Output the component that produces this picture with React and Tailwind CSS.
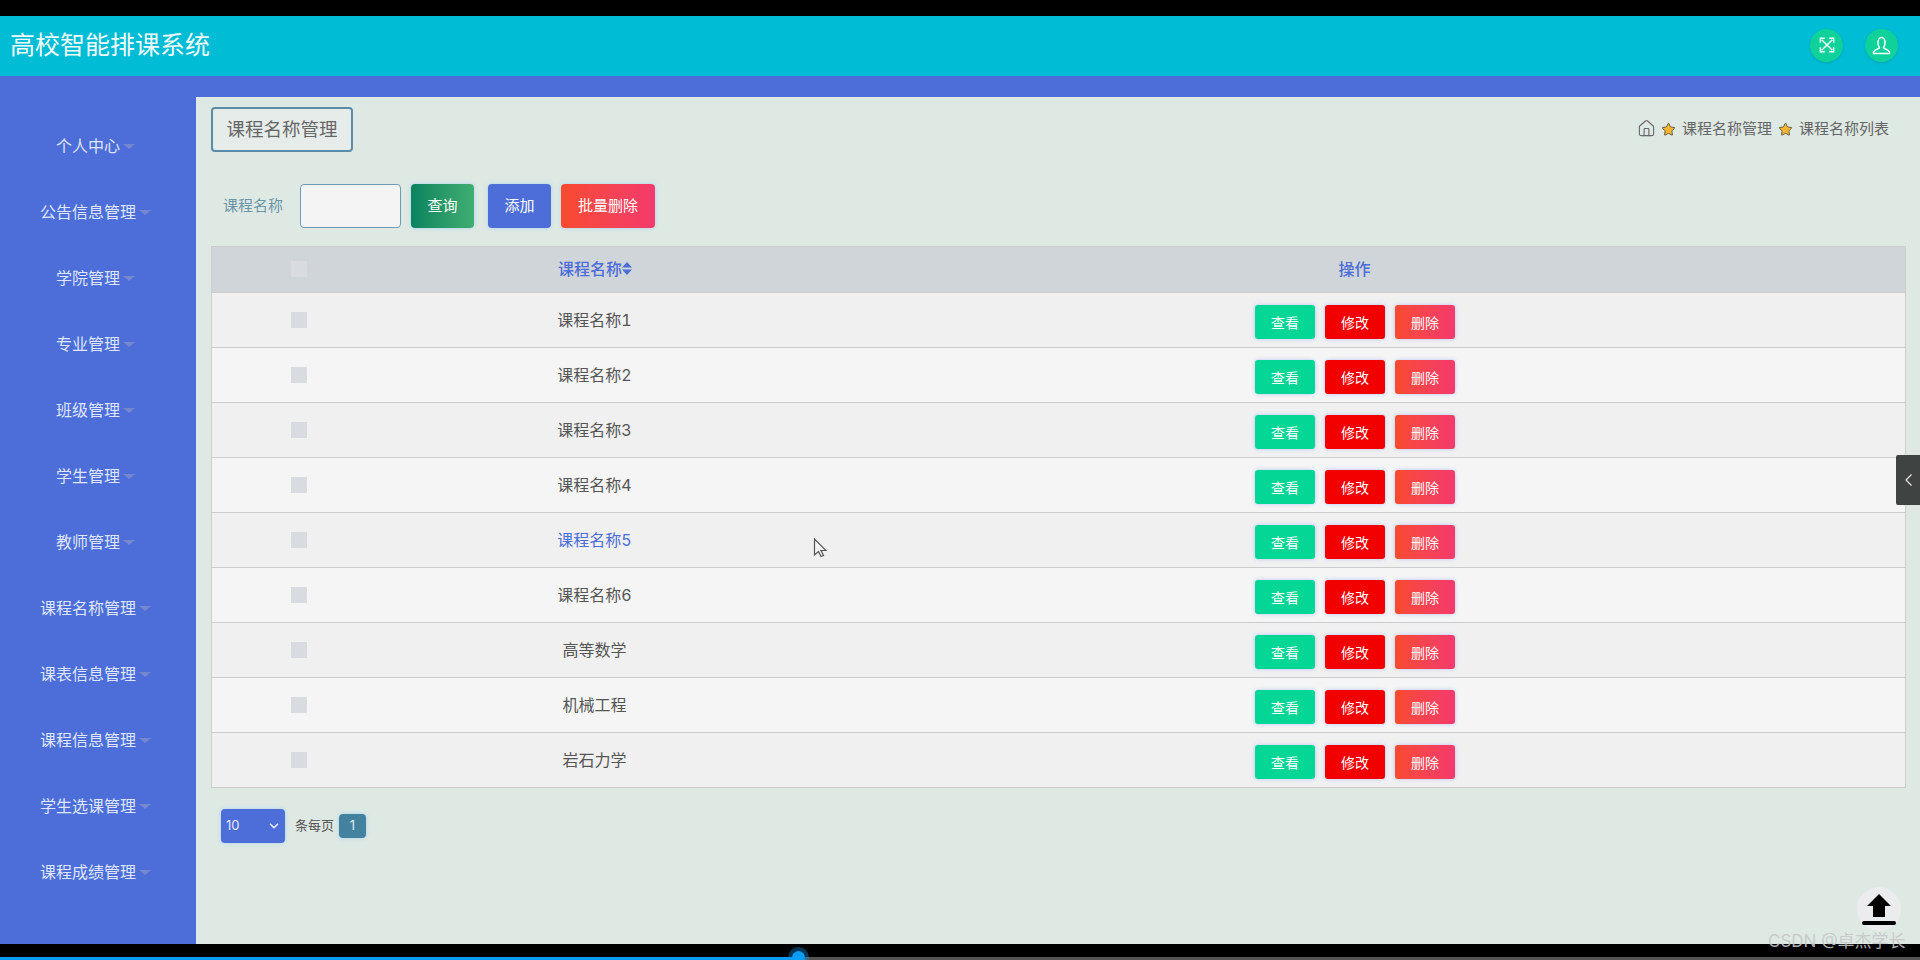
import React from 'react';
import { Home, Star, ChevronDown } from 'lucide-react';

const menu = ['个人中心', '公告信息管理', '学院管理', '专业管理', '班级管理', '学生管理', '教师管理', '课程名称管理', '课表信息管理', '课程信息管理', '学生选课管理', '课程成绩管理'];
const rows = ['课程名称1', '课程名称2', '课程名称3', '课程名称4', '课程名称5', '课程名称6', '高等数学', '机械工程', '岩石力学'];

const GoldStar = () => <Star size={15} className="fill-[#f2b632] text-[#5c5340]" strokeWidth={1.5} />;

const App = () => {
  return (
    <div className="relative w-[1920px] h-[960px] overflow-hidden bg-black flex flex-col pt-4 font-[Inter,'Noto_Sans_CJK_SC',sans-serif]">
      <header className="h-[60px] shrink-0 bg-[#00bcd4] flex items-center justify-between pl-[10px] pr-[22px]">
        <h1 className="text-[25px] text-[#f1fbfc]">高校智能排课系统</h1>
        <div className="flex items-center gap-[22px] mb-[2px]">
          <button className="w-[33px] h-[33px] rounded-full bg-[#0ed29a] flex items-center justify-center shadow-sm">
            <svg width="16" height="16" viewBox="0 0 18 18" fill="none" stroke="#fff" strokeWidth="1.600">
              <path d="M3 3 15 15M15 3 3 15" />
              <path d="M1.500 6.500V1.500H6.500M11.500 1.500H16.500V6.500M16.500 11.500V16.500H11.500M6.500 16.500H1.500V11.500" />
            </svg>
          </button>
          <button className="w-[33px] h-[33px] rounded-full bg-[#0ed29a] flex items-center justify-center shadow-sm">
            <svg width="19" height="19" viewBox="0 0 19 19" fill="none" stroke="#fff" strokeWidth="1.500">
              <path d="M6 7.500C6 4 7 1.500 9.500 1.500S13 4 13 7.500C13 9.500 12 10.500 11.500 11.500 11.500 13 17.500 13.500 17.500 16.500V17.500H1.500V16.500C1.500 13.500 7.500 13 7.500 11.500 7 10.500 6 9.500 6 7.500Z" />
            </svg>
          </button>
        </div>
      </header>

      <div className="h-[868px] shrink-0 flex bg-[#4d6dd8]">
        <aside className="w-[196px] shrink-0 pt-[37px]">
          {menu.map((m, i) => (
            <div key={i} className="h-[66px] flex items-center justify-center text-[16px] text-[#dfe6fa] pr-[5px]">
              {m}
              <span className="ml-[3px] mt-[1px] border-x-[6px] border-t-[5px] border-x-transparent border-t-[#7488cf] border-b-0"></span>
            </div>
          ))}
        </aside>

        <main className="flex-1 mt-[21px] bg-[#dfe9e4] pl-[15px] pr-[14px] pt-[10px]">
          <div className="flex items-center justify-between h-[45px]">
            <div className="w-[142px] h-[45px] border-2 border-[#5b8ba8] rounded-[4px] bg-[#e6ecea] flex items-center justify-center text-[18.500px] text-[#666]">课程名称管理</div>
            <div className="flex items-center text-[15px] text-[#666] pr-[17px]">
              <Home size={19} strokeWidth={1.4} className="mr-[5px] mb-[2px]" />
              <GoldStar />
              <span className="ml-[6px] mr-[6px]">课程名称管理</span>
              <GoldStar />
              <span className="ml-[6px]">课程名称列表</span>
            </div>
          </div>

          <div className="flex items-center mt-[32px] h-[44px] pl-[12px]">
            <label className="w-[77px] text-[15px] text-[#6d95a8]">课程名称</label>
            <input className="w-[101px] h-[44px] rounded-[4px] border border-[#6f9ab3] bg-[#f3f4f3]" />
            <button className="ml-[10px] w-[63px] h-[44px] rounded-[4px] bg-gradient-to-r from-[#06835f] to-[#3fae72] text-white text-[15px] shadow-[0_0_5px_#a8d4e8]">查询</button>
            <button className="ml-[14px] w-[63px] h-[44px] rounded-[4px] bg-[#4d6dd8] text-white text-[15px] shadow-[0_0_5px_#a8d4e8]">添加</button>
            <button className="ml-[10px] w-[94px] h-[44px] rounded-[4px] bg-gradient-to-r from-[#f84a2c] to-[#f43a6c] text-white text-[15px] shadow-[0_0_5px_#a8d4e8]">批量删除</button>
          </div>

          <div className="mt-[18px] border border-[#ccc]">
            <div className="grid grid-cols-[173px_418px_1fr] h-[45px] items-center bg-[#d0d5d9] text-[16px] font-medium text-[#4d6dd8]">
              <div className="flex justify-center pb-[2px]"><span className="w-4 h-4 bg-[#d8dbe0]"></span></div>
              <div className="flex items-center justify-center pb-[2px] pl-[2px]">
                课程名称
                <svg width="10" height="15" viewBox="0 0 10 15" className="fill-[#4d6dd8]"><path d="M5 1 10 6.500H0zM5 14 0 8.500h10z" /></svg>
              </div>
              <div className="text-center pb-[2px] pl-[1px]">操作</div>
            </div>
            {rows.map((r, i) => (
              <div key={i} className={`grid grid-cols-[173px_418px_1fr] h-[55px] items-center border-t border-[#ccc] text-[16px] tabular-nums ${i % 2 ? 'bg-[#f5f5f5]' : 'bg-[#f0f0f1]'} ${i === 4 ? 'text-[#4d6dd8]' : 'text-[#555]'}`}>
                <div className="flex justify-center"><span className="w-4 h-4 bg-[#d8dbe0]"></span></div>
                <div className="text-center pb-[1px] pl-[1px]">{r}</div>
                <div className="flex justify-center gap-[10px] pt-[4px] pl-[2px]">
                  <button className="w-[60px] h-[34px] rounded-[3px] bg-[#03d695] text-white text-[14px] shadow-[0_0_4px_#b9c8f5]">查看</button>
                  <button className="w-[60px] h-[34px] rounded-[3px] bg-[#f20000] text-white text-[14px] shadow-[0_0_4px_#b9c8f5]">修改</button>
                  <button className="w-[60px] h-[34px] rounded-[3px] bg-gradient-to-r from-[#f84a2c] to-[#f43a6c] text-white text-[14px] shadow-[0_0_4px_#b9c8f5]">删除</button>
                </div>
              </div>
            ))}
          </div>

          <div className="flex items-center mt-[21px] pl-[10px]">
            <div className="w-[64px] h-[34px] rounded-[4px] bg-[#4d6dd8] text-[#e3e9fb] text-[13px] flex items-center justify-between pl-[5px] pr-[4px] shadow-[0_0_5px_#a8d4e8]">
              10
              <ChevronDown size={14} strokeWidth={3} />
            </div>
            <span className="ml-[10px] text-[13px] text-[#555]">条每页</span>
            <span className="ml-[5px] w-[27px] h-[24px] rounded-[4px] bg-[#43829f] text-[#dfeef3] text-[13px] flex items-center justify-center shadow-[0_0_5px_#a8d4e8]">1</span>
          </div>
        </main>
      </div>

      <div className="h-[13px] shrink-0 bg-black"></div>
      <div className="h-[3px] shrink-0 flex bg-[#555]"><div className="w-[798px] bg-[#0a9bf5]"></div></div>

      {/* overlays */}
      <div className="absolute left-[1896px] top-[455px] w-[24px] h-[50px] rounded-l-[2px] bg-[#3f4442] flex items-center justify-center">
        <svg width="9" height="14" viewBox="0 0 9 14" fill="none" stroke="#e5e5e5" strokeWidth="1.200"><path d="M7.500 1.500 2 7l5.500 5.500" /></svg>
      </div>
      <svg className="absolute left-[813px] top-[538px]" width="14" height="22" viewBox="0 0 14 22">
        <path d="M1.500 1v16l4-3.500 2.500 5 2.500-1-2.500-5h5z" fill="#f5f5f5" stroke="#555" strokeWidth="1.200" />
      </svg>
      <div className="absolute left-[1857px] top-[887px] w-[44px] h-[44px] rounded-full bg-[#eaeced] flex items-center justify-center">
        <svg width="36" height="34" viewBox="0 0 36 34" className="fill-black"><path d="M18 2 30 14h-6v11H12V14H6z" /><rect x="1" y="29" width="34" height="4" rx="2" /></svg>
      </div>
      <div className="absolute left-[1768px] top-[929px] text-[17px] leading-[24px] text-[#c5c8c8]/90">CSDN @卓杰学长</div>
      <div className="absolute left-[792px] top-[951px] w-[13px] h-[13px] rounded-full bg-[#0a9bf5] shadow-[0_0_0_4px_rgba(10,155,245,0.35)]"></div>
    </div>
  );
};

export default App;
